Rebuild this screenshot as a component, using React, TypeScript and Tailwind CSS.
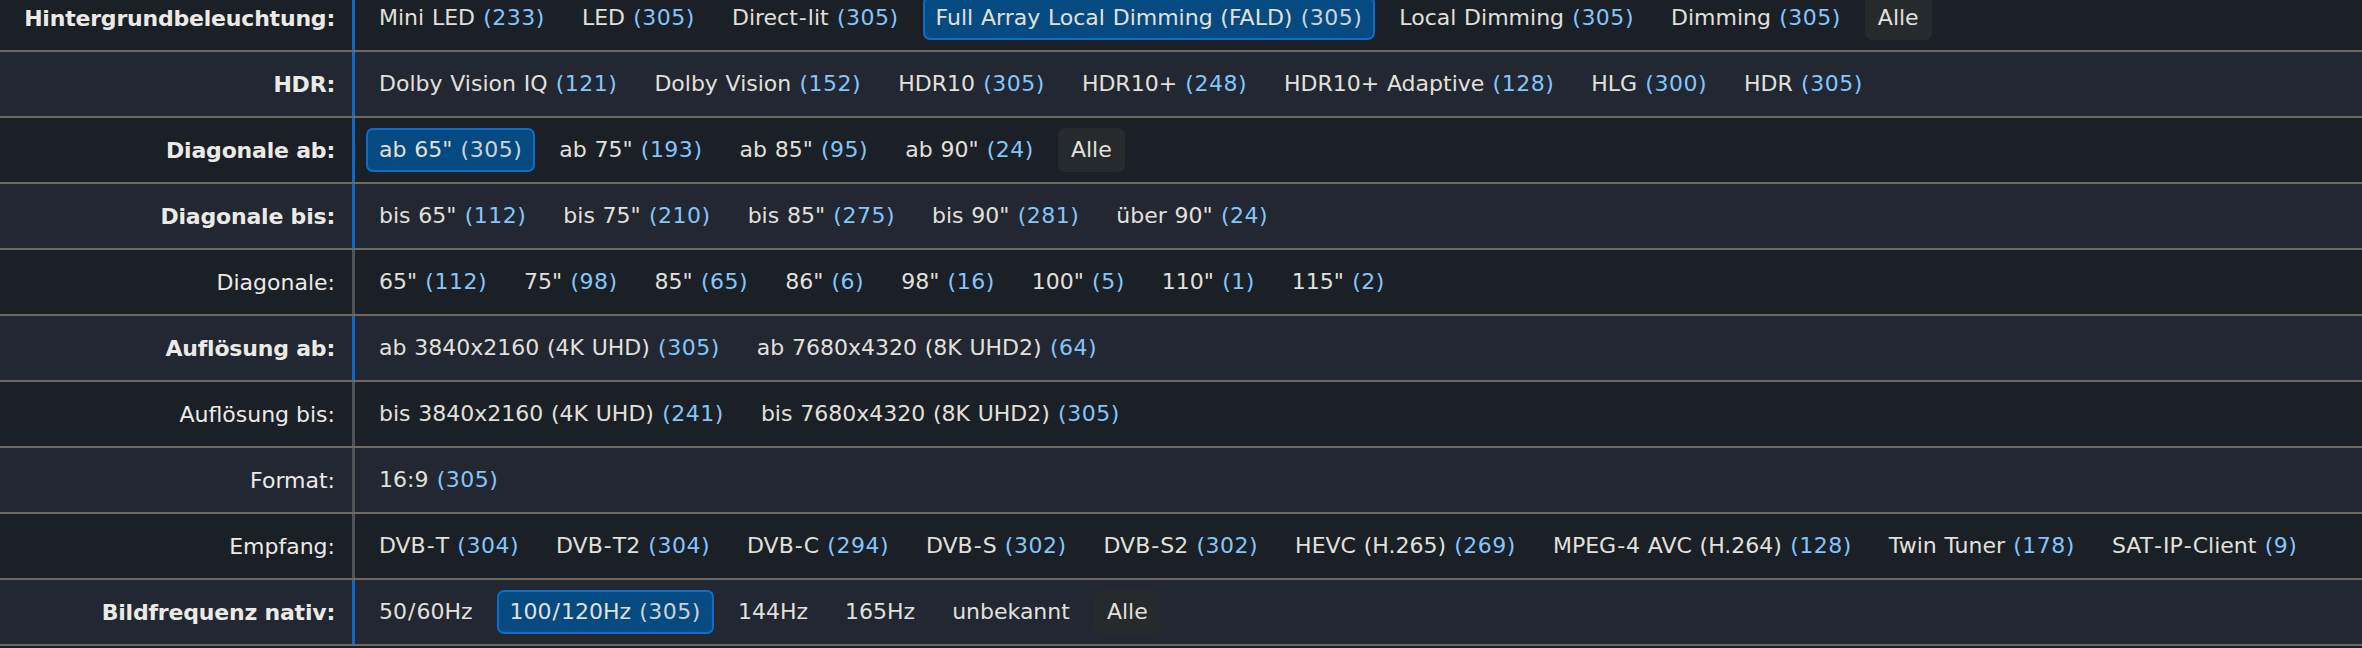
import React from 'react';

type Item = { text: string; count?: number; selected?: boolean; all?: boolean };

type Row = { label: string; strong: boolean; items: Item[] };

const rows: Row[] = [
  {
    label: 'Hintergrundbeleuchtung:',
    strong: true,
    items: [
      { text: 'Mini LED', count: 233 },
      { text: 'LED', count: 305 },
      { text: 'Direct-lit', count: 305 },
      { text: 'Full Array Local Dimming (FALD)', count: 305, selected: true },
      { text: 'Local Dimming', count: 305 },
      { text: 'Dimming', count: 305 },
      { text: 'Alle', all: true },
    ],
  },
  {
    label: 'HDR:',
    strong: true,
    items: [
      { text: 'Dolby Vision IQ', count: 121 },
      { text: 'Dolby Vision', count: 152 },
      { text: 'HDR10', count: 305 },
      { text: 'HDR10+', count: 248 },
      { text: 'HDR10+ Adaptive', count: 128 },
      { text: 'HLG', count: 300 },
      { text: 'HDR', count: 305 },
    ],
  },
  {
    label: 'Diagonale ab:',
    strong: true,
    items: [
      { text: 'ab 65"', count: 305, selected: true },
      { text: 'ab 75"', count: 193 },
      { text: 'ab 85"', count: 95 },
      { text: 'ab 90"', count: 24 },
      { text: 'Alle', all: true },
    ],
  },
  {
    label: 'Diagonale bis:',
    strong: true,
    items: [
      { text: 'bis 65"', count: 112 },
      { text: 'bis 75"', count: 210 },
      { text: 'bis 85"', count: 275 },
      { text: 'bis 90"', count: 281 },
      { text: 'über 90"', count: 24 },
    ],
  },
  {
    label: 'Diagonale:',
    strong: false,
    items: [
      { text: '65"', count: 112 },
      { text: '75"', count: 98 },
      { text: '85"', count: 65 },
      { text: '86"', count: 6 },
      { text: '98"', count: 16 },
      { text: '100"', count: 5 },
      { text: '110"', count: 1 },
      { text: '115"', count: 2 },
    ],
  },
  {
    label: 'Auflösung ab:',
    strong: true,
    items: [
      { text: 'ab 3840x2160 (4K UHD)', count: 305 },
      { text: 'ab 7680x4320 (8K UHD2)', count: 64 },
    ],
  },
  {
    label: 'Auflösung bis:',
    strong: false,
    items: [
      { text: 'bis 3840x2160 (4K UHD)', count: 241 },
      { text: 'bis 7680x4320 (8K UHD2)', count: 305 },
    ],
  },
  {
    label: 'Format:',
    strong: false,
    items: [{ text: '16:9', count: 305 }],
  },
  {
    label: 'Empfang:',
    strong: false,
    items: [
      { text: 'DVB-T', count: 304 },
      { text: 'DVB-T2', count: 304 },
      { text: 'DVB-C', count: 294 },
      { text: 'DVB-S', count: 302 },
      { text: 'DVB-S2', count: 302 },
      { text: 'HEVC (H.265)', count: 269 },
      { text: 'MPEG-4 AVC (H.264)', count: 128 },
      { text: 'Twin Tuner', count: 178 },
      { text: 'SAT-IP-Client', count: 9 },
    ],
  },
  {
    label: 'Bildfrequenz nativ:',
    strong: true,
    items: [
      { text: '50/60Hz' },
      { text: '100/120Hz', count: 305, selected: true },
      { text: '144Hz' },
      { text: '165Hz' },
      { text: 'unbekannt' },
      { text: 'Alle', all: true },
    ],
  },
];

// the original font is Verdana, whose hyphen and slash are a bit wider than DejaVu's
function Spaced({ text }: { text: string }) {
  const parts = text.split(/([-/])/);
  return (
    <>
      {parts.map((p, i) =>
        p === '-' || p === '/' ? (
          <span key={i} className="mx-[1px]">
            {p}
          </span>
        ) : (
          p
        ),
      )}
    </>
  );
}

function FilterItem({ item }: { item: Item }) {
  let box = 'border-transparent';
  if (item.selected) box = 'bg-[#054a80] border-[#0d6dcb]';
  if (item.all) box = 'bg-[#272a2d] border-transparent';

  return (
    <a
      className={`whitespace-nowrap rounded-[7px] border-2 px-[11px] py-[7px] leading-[26px] [word-spacing:0.75px] text-[#e2e0dc] ${box}`}
    >
      <Spaced text={item.text} />
      {item.count !== undefined && (
        <span className={`tracking-[0.5px] ${item.selected ? 'text-[#cfd2d6]' : 'text-[#82c6fc]'}`}> ({item.count})</span>
      )}
    </a>
  );
}

export default function App() {
  return (
    <div className="h-[648px] w-full overflow-hidden bg-[#1b1f26] font-['DejaVu_Sans','Verdana',sans-serif] text-[22px]">
      <div className="-mt-[14px]">
        {rows.map((row, i) => (
          <div
            key={row.label}
            className={`flex h-[66px] border-b-2 border-[#6f6a5f] ${i % 2 === 0 ? 'bg-[#1b1f26]' : 'bg-[#222731]'}`}
          >
            <div
              className={`flex w-[352px] shrink-0 items-center justify-end pr-[17px] text-[#eceae6] ${row.strong ? 'font-bold tracking-[-0.2px]' : 'font-normal'}`}
            >
              {row.label}
            </div>
            <div
              className={`flex flex-1 items-center gap-[11px] border-l-[3px] pl-[11px] ${row.strong ? 'border-[#0c6ac4]' : 'border-[#505254]'}`}
            >
              {row.items.map((item) => (
                <FilterItem key={item.text} item={item} />
              ))}
            </div>
          </div>
        ))}
      </div>
    </div>
  );
}
